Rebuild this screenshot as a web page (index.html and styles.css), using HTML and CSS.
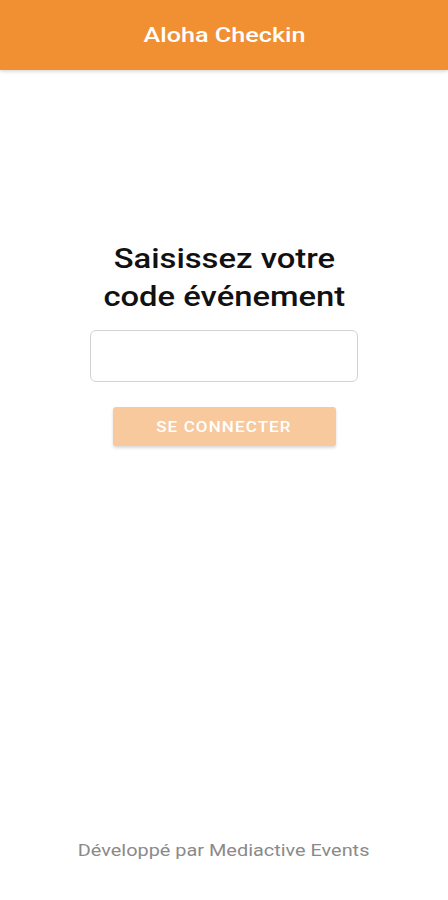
FILE: index.html
```html
<!DOCTYPE html>
<html lang="fr">
<head>
    <meta charset="UTF-8">
    <meta name="viewport" content="width=device-width, initial-scale=1.0">
    <title>Aloha Checkin</title>
    <link rel="stylesheet" href="styles.css">
</head>
<body>
<div class="app">
    <header class="topbar"><span class="topbar-title">Aloha Checkin</span></header>
    <main class="login">
        <h1 class="login-title"><span class="wide">Saisissez votre<br>code événement</span></h1>
        <input class="code-input" type="text" name="code">
        <button class="connect-btn" type="button" disabled><span class="btn-label">Se connecter</span></button>
    </main>
    <footer class="credit"><span class="wide">Développé par Mediactive Events</span></footer>
</div>
</body>
</html>
```

FILE: styles.css
```css
body {
    margin: 0;
    font-family: Roboto, "Noto Sans", sans-serif;
    background: #fff;
}

.app {
    display: flex;
    flex-direction: column;
    height: 900px;
}

/* the capture is a bit stretched sideways, so text gets widened to match */
.wide {
    display: inline-block;
    transform: scaleX(1.17);
}

.topbar {
    height: 70px;
    display: flex;
    align-items: center;
    justify-content: center;
    background-color: #F09033;
    color: #fff;
    font-size: 21px;
    font-weight: 500;
    box-shadow: 0 1px 4px rgba(0, 0, 0, 0.2);
}

.topbar-title {
    display: inline-block;
    transform: scaleX(1.2);
}

.login {
    flex: 1;
    display: flex;
    flex-direction: column;
    align-items: center;
    padding-top: 170px;
}

.login-title {
    margin: 0 0 14px;
    text-align: center;
    font-size: 28px;
    font-weight: 500;
    line-height: 38px;
    color: #111;
}

.code-input {
    box-sizing: border-box;
    width: 268px;
    height: 52px;
    border: 1px solid #d3d3d3;
    border-radius: 6px;
    padding: 0 12px;
    font-size: 16px;
}

.connect-btn {
    margin-top: 25px;
    width: 223px;
    height: 39px;
    border: none;
    border-radius: 3px;
    background-color: #F8C99C;
    color: #fff;
    font-family: Roboto, sans-serif;
    font-size: 15px;
    font-weight: 500;
    letter-spacing: 1px;
    text-transform: uppercase;
    box-shadow: 0 2px 3px rgba(0, 0, 0, 0.15);
}

.btn-label {
    display: inline-block;
    transform: scaleX(1.13);
}

.credit {
    text-align: center;
    color: #8a8a8a;
    font-size: 17px;
    padding-bottom: 40px;
}
```
